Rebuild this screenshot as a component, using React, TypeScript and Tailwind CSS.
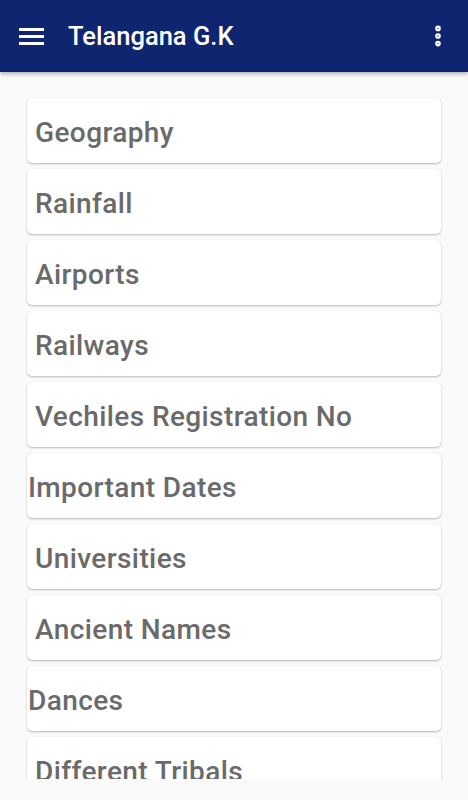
import { EllipsisVertical } from 'lucide-react';

const topics: { label: string; flush?: boolean }[] = [
  { label: 'Geography' },
  { label: 'Rainfall' },
  { label: 'Airports' },
  { label: 'Railways' },
  { label: 'Vechiles Registration No' },
  { label: 'Important Dates', flush: true },
  { label: 'Universities' },
  { label: 'Ancient Names' },
  { label: 'Dances', flush: true },
  { label: 'Different Tribals' },
];

function Hamburger() {
  return (
    <svg width="26" height="20" viewBox="0 0 26 20" className="block">
      <rect x="0" y="2" width="25" height="3" fill="white" />
      <rect x="0" y="9" width="25" height="3" fill="white" />
      <rect x="0" y="16" width="25" height="3" fill="white" />
    </svg>
  );
}

export default function App() {
  return (
    <div className="flex h-[800px] w-[468px] flex-col bg-[#fafafa] font-['Roboto',sans-serif]">
      <header className="relative z-10 flex h-[72px] shrink-0 items-center bg-[#10256f] shadow-[0_2px_4px_rgba(0,0,0,0.3)]">
        <div className="ml-[19px]">
          <Hamburger />
        </div>
        <h1 className="ml-[23px] text-[25.5px] font-medium text-white">Telangana G.K</h1>
        <div className="ml-auto mr-[17px] flex items-center text-white">
          <EllipsisVertical size={26} strokeWidth={3.2} />
        </div>
      </header>

      <main className="h-[707px] shrink-0 overflow-hidden">
        <ul className="flex flex-col gap-[6px] px-[27px] pt-[26px]">
          {topics.map((t) => (
            <li
              key={t.label}
              className="flex h-[65px] shrink-0 items-center rounded-[5px] bg-white shadow-[0_1px_2px_rgba(0,0,0,0.25),0_0_1px_rgba(0,0,0,0.12)]"
            >
              <span
                className={
                  (t.flush ? 'pl-[1px]' : 'pl-[8px]') +
                  ' pt-[5px] text-[28px] font-medium leading-none tracking-[0.4px] text-[#6a6a6a]'
                }
              >
                {t.label}
              </span>
            </li>
          ))}
        </ul>
      </main>
    </div>
  );
}
